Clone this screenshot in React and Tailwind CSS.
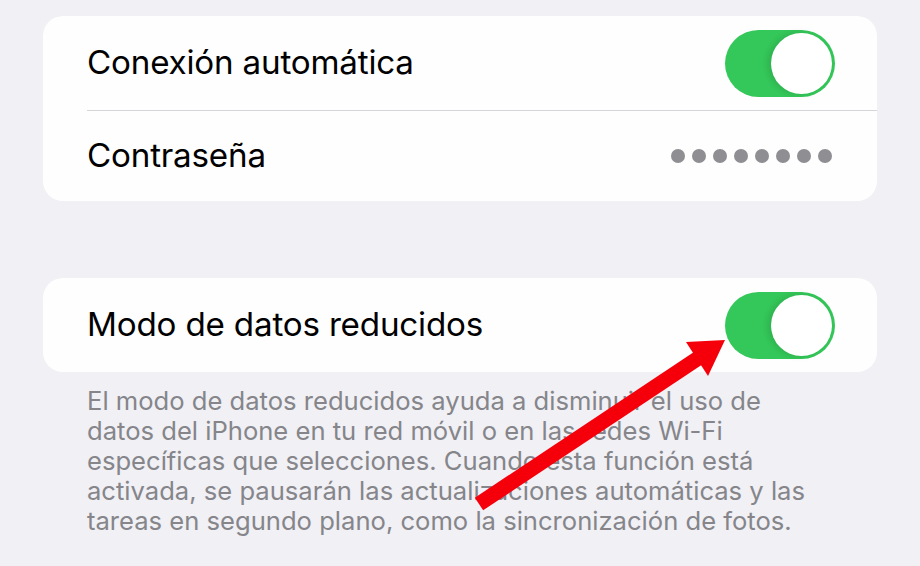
import React from 'react'

function Toggle() {
    return (
        <div className="w-[110px] h-[67px] rounded-full bg-[#34c759] p-[3px] flex justify-end shrink-0">
            <div className="w-[61px] h-[61px] rounded-full bg-white shadow-[-3px_0_6px_rgba(0,0,0,0.12)]"></div>
        </div>
    )
}

export default function App() {
    const font = { fontFamily: 'Inter, "Liberation Sans", sans-serif' }
    return (
        <div className="relative w-[920px] h-[566px] bg-[#f0f0f5] overflow-hidden pt-[16px] pl-[43px]" style={font}>
            {/* Wi-Fi card */}
            <div className="w-[834px] bg-[#fefefe] rounded-[20px] pl-[44px]">
                <div className="h-[94px] flex items-center justify-between pr-[42px]">
                    <span className="text-[33.2px] text-black tracking-[-0.2px]">Conexión automática</span>
                    <Toggle />
                </div>
                <div className="h-px bg-[#d6d6da]"></div>
                <div className="h-[90px] flex items-center justify-between pr-[45px]">
                    <span className="text-[33.2px] text-black tracking-[-0.2px]">Contraseña</span>
                    <div className="flex gap-[7px]">
                        {[0, 1, 2, 3, 4, 5, 6, 7].map(i => (
                            <div key={i} className="w-[14px] h-[14px] rounded-full bg-[#8e8e93]"></div>
                        ))}
                    </div>
                </div>
            </div>

            {/* Low data mode card */}
            <div className="mt-[77px] w-[834px] bg-[#fefefe] rounded-[20px] pl-[44px]">
                <div className="h-[94px] flex items-center justify-between pr-[42px]">
                    <span className="text-[33.2px] text-black tracking-[-0.2px]">Modo de datos reducidos</span>
                    <Toggle />
                </div>
            </div>

            <div className="pl-[44px] pt-[14px] text-[25.6px] leading-[30px] text-[#85858a]">
                <div>El modo de datos reducidos ayuda a disminuir el uso de</div>
                <div>datos del iPhone en tu red móvil o en las redes Wi-Fi</div>
                <div>específicas que selecciones. Cuando esta función está</div>
                <div>activada, se pausarán las actualizaciones automáticas y las</div>
                <div>tareas en segundo plano, como la sincronización de fotos.</div>
            </div>

            {/* Red annotation arrow */}
            <svg className="absolute left-0 top-0" width="920" height="566" viewBox="0 0 920 566">
                <line x1="479" y1="504" x2="700" y2="357" stroke="#f5000a" strokeWidth="15" />
                <polygon points="725,340 686,342 708,376" fill="#f5000a" />
            </svg>
        </div>
    )
}
